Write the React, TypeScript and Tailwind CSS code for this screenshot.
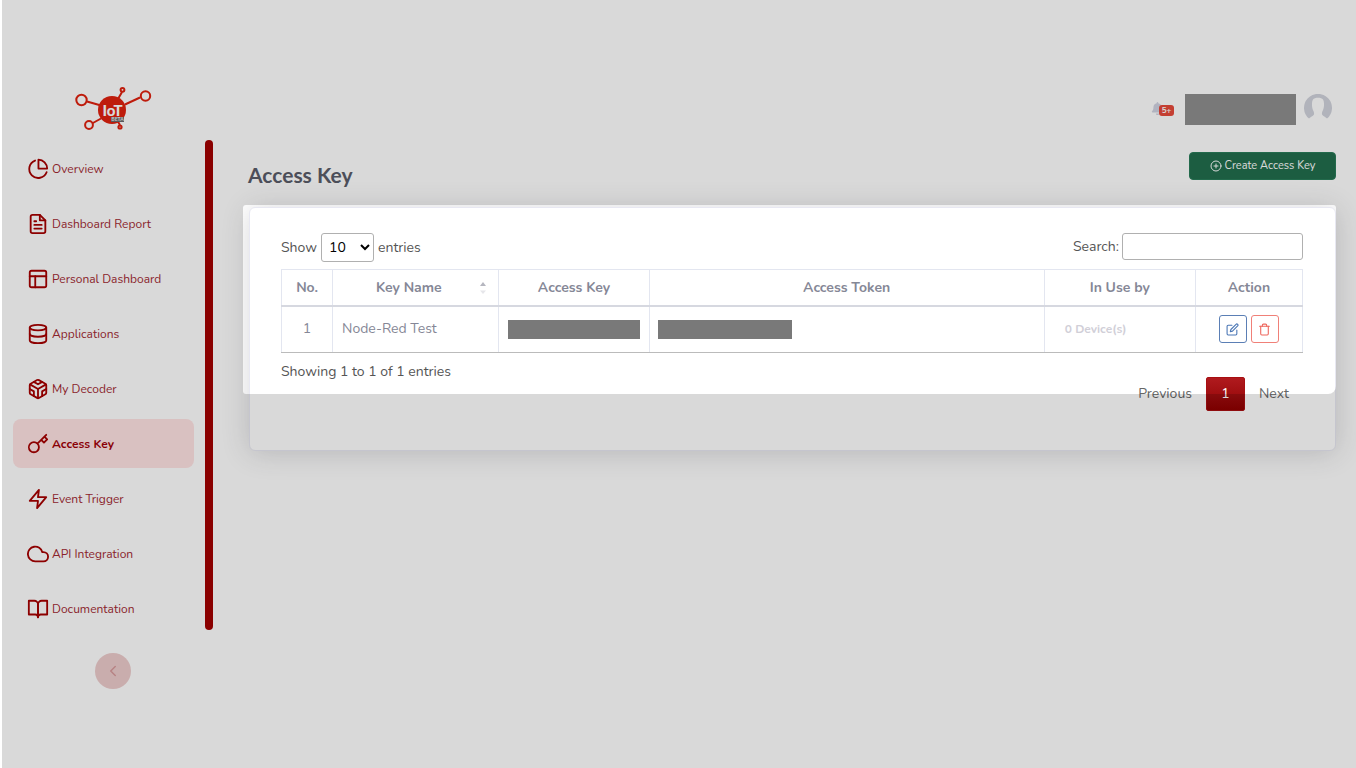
import React from "react";
import {
  FiBookOpen,
  FiChevronLeft,
  FiCloud,
  FiCodesandbox,
  FiDatabase,
  FiEdit,
  FiFileText,
  FiKey,
  FiLayout,
  FiPlusCircle,
  FiTrash,
  FiZap,
} from "react-icons/fi";
import { FaBell } from "react-icons/fa";

type IconProps = { className?: string };

function PieIcon({ className }: IconProps) {
  return (
    <svg viewBox="0 0 24 24" className={className} fill="none" stroke="currentColor" strokeWidth="2" strokeLinecap="round" strokeLinejoin="round" aria-hidden="true">
      <path d="M8.800 2.800A9.800 9.800 0 1 0 21.400 15.500" />
      <path d="M12.500 1.800v9.700H22A9.800 9.800 0 0 0 12.500 1.800z" />
    </svg>
  );
}

function Logo() {
  return (
    <svg viewBox="0 0 78 46" className="h-[46px] w-[78px]" fill="none" stroke="#e0210f" strokeWidth="2" role="img" aria-label="IoT Beta">
      <path d="M13 15.500 27 19.500M51 18.500 66 11.500M44 13l4-7M27 32.500l-9 5M43 34l3 5" />
      <circle cx="7.500" cy="14" r="5.200" />
      <circle cx="71.500" cy="10" r="4.700" />
      <circle cx="48.500" cy="3.800" r="1.900" />
      <circle cx="15" cy="39" r="3.900" />
      <circle cx="46" cy="41" r="1.600" />
      <circle cx="38" cy="24" r="14" fill="#e0210f" stroke="none" />
      <text x="38.500" y="29.500" textAnchor="middle" fontFamily="Lato, sans-serif" fontWeight="900" fontSize="15" fill="#fff" stroke="none">IoT</text>
      <rect x="37" y="31" width="13" height="5" fill="#68686b" stroke="none" />
      <text x="43.500" y="35.300" textAnchor="middle" fontFamily="Lato, sans-serif" fontWeight="700" fontSize="5" fill="#e8e8e8" stroke="none">BETA</text>
    </svg>
  );
}

function Avatar() {
  return (
    <svg viewBox="0 0 28 28" className="size-7" role="img" aria-label="Profile">
      <path fill="#d1d3dc" d="M5 24.600A14 14 0 1 1 23 24.600C21.500 23 19 22 18.200 20.800C17.600 19.500 18 17.800 18.800 16.400C20.300 13.500 20.500 8 19 5.600C17.500 3 10.500 3 9 5.600C7.500 8 7.700 13.500 9.200 16.400C10 17.800 10.400 19.500 9.800 20.800C9 22 6.500 23 5 24.600Z" />
    </svg>
  );
}

const navItems = [
  { label: "Overview", Icon: PieIcon },
  { label: "Dashboard Report", Icon: FiFileText },
  { label: "Personal Dashboard", Icon: FiLayout },
  { label: "Applications", Icon: FiDatabase },
  { label: "My Decoder", Icon: FiCodesandbox },
  { label: "Access Key", Icon: FiKey, active: true },
  { label: "Event Trigger", Icon: FiZap },
  { label: "API Integration", Icon: FiCloud },
  { label: "Documentation", Icon: FiBookOpen },
];

function Sidebar() {
  return (
    <aside className="flex w-[211px] shrink-0 flex-col pt-[86px]">
      <div className="h-[54px] pl-[72px]">
        <Logo />
      </div>
      <div className="flex justify-between">
        <nav className="flex w-[192px] flex-col gap-1.5 pt-1 pl-[11px]">
          {navItems.map(({ label, Icon, active }) => (
            <a
              key={label}
              href="#"
              aria-current={active ? "page" : undefined}
              className={
                active
                  ? "flex h-[49px] items-center gap-[3px] rounded-lg bg-[#ffe3e3] pl-3.5 text-xs font-bold text-[#a30008]"
                  : "flex h-[49px] items-center gap-[3px] pl-3.5 text-xs text-[#a32a33]"
              }
            >
              <Icon className="size-[22px] text-[#a60000]" />
              {label}
            </a>
          ))}
        </nav>
        <div className="mb-[3px] w-2 rounded-full bg-[#a30000]" />
      </div>
      <button type="button" aria-label="Collapse sidebar" className="mt-5 ml-[93px] flex size-9 items-center justify-center rounded-full bg-[#edcccc] text-[#d79a9c]">
        <FiChevronLeft className="size-[18px]" />
      </button>
    </aside>
  );
}

const th = "border border-[#e3e6f0] border-b-2 border-b-[#d6d8e0] px-2 pt-px text-center font-bold";
const td = "border border-[#e3e6f0] border-b-[#bbbbbb]";

function KeyTable() {
  return (
    <table className="mt-[7px] w-full table-fixed border-collapse text-sm text-[#858796]">
      <colgroup>
        <col className="w-[5%]" />
        <col className="w-[16.300%]" />
        <col className="w-[14.700%]" />
        <col />
        <col className="w-[14.800%]" />
        <col className="w-[10.500%]" />
      </colgroup>
      <thead>
        <tr className="h-9">
          <th className={th}>No.</th>
          <th className={th}>
            <div className="flex items-center pr-1">
              <span className="flex-1 pr-1">Key Name</span>
              <svg viewBox="0 0 6 12" className="h-3 w-1.5" aria-hidden="true">
                <path d="M0 4 3 0l3 4z" fill="#b5b6bf" />
                <path d="M0 8.500h6l-3 3.500z" fill="#e6e6ea" />
              </svg>
            </div>
          </th>
          <th className={th}>Access Key</th>
          <th className={th}>Access Token</th>
          <th className={th}>In Use by</th>
          <th className={th}>Action</th>
        </tr>
      </thead>
      <tbody>
        <tr className="h-[47px]">
          <td className={`${td} text-center`}>1</td>
          <td className={`${td} pl-[9px]`}>Node-Red Test</td>
          <td className={`${td} px-[9px]`}>
            <div className="h-[19px] bg-[#797979]" />
          </td>
          <td className={`${td} px-2`}>
            <div className="h-[19px] w-[134px] bg-[#797979]" />
          </td>
          <td className={`${td} pl-5 text-xs font-bold text-[#d1cfd8]`}>0 Device(s)</td>
          <td className={td}>
            <div className="flex justify-center gap-1">
              <button type="button" aria-label="Edit" className="flex size-7 items-center justify-center rounded-[3px] border border-[#5b7fb5] text-[#4a76b5]">
                <FiEdit className="size-[13px]" />
              </button>
              <button type="button" aria-label="Delete" className="flex size-7 items-center justify-center rounded-[3px] border border-[#f08078] text-[#ee665c]">
                <FiTrash className="size-[13px]" />
              </button>
            </div>
          </td>
        </tr>
      </tbody>
    </table>
  );
}

function KeyCard() {
  return (
    <section className="relative ml-1.5">
      <div className="h-[244px] rounded-md border border-[#e8e8f2] bg-white pt-[25px] pr-8 pl-[31px] text-sm text-[#555555] shadow-[0_2px_28px_rgba(58,59,69,0.2)]">
        <div className="flex items-start justify-between">
          <label className="flex items-center gap-1">
            Show
            <select defaultValue="10" className="h-[29px] w-[53px] rounded-[3px] border border-[#b0b0b0] bg-white pl-[3px] text-sm text-black">
              <option>10</option>
              <option>25</option>
              <option>50</option>
              <option>100</option>
            </select>
            entries
          </label>
          <label className="flex items-center gap-[3px]">
            Search:
            <input type="search" className="h-[27px] w-[181px] rounded-[3px] border border-[#b0b0b0] bg-white px-1" />
          </label>
        </div>
        <KeyTable />
        <div className="flex items-start justify-between pt-2">
          <p className="leading-[22px]">Showing 1 to 1 of 1 entries</p>
          <div className="flex items-center pt-4 text-[#666666]">
            <button type="button" className="h-[34px] px-3.5">Previous</button>
            <button type="button" className="h-[34px] w-[39px] rounded-[2px] border border-[#a80f12] bg-linear-to-b from-[#b01a1e] to-[#900000] text-white">1</button>
            <button type="button" className="h-[34px] px-3.5">Next</button>
          </div>
        </div>
      </div>
      <div className="pointer-events-none absolute -top-0.5 right-0 -left-1.5 h-[189px] rounded-l-[3px] rounded-tr-[3px] rounded-br-lg shadow-[0_0_0_3000px_rgba(0,0,0,0.15)]" />
    </section>
  );
}

export default function App() {
  return (
    <div className="min-h-screen bg-white pl-0.5 font-[Nunito,Lato,sans-serif]">
      <div className="flex min-h-screen overflow-hidden bg-white">
        <Sidebar />
        <main className="min-w-0 flex-1 pt-[94px] pr-5 pl-[30px]">
          <header className="flex h-[31px] items-start justify-end pr-1">
            <div className="relative mt-2 mr-[22px] w-3">
              <FaBell className="size-[13px] text-[#d1d3e2]" aria-label="Notifications" />
              <span className="absolute top-[3px] left-2 flex h-[11px] w-[15px] items-center justify-center rounded-[3px] bg-[#e74a3b] text-[8px] font-bold text-white">5+</span>
            </div>
            <div className="relative z-10 mr-2 h-[31px] w-[111px] bg-[#797979]" />
            <Avatar />
          </header>
          <div className="mt-[27px] flex h-[55px] items-start justify-between">
            <h1 className="pt-[9px] pl-[5px] font-[Lato,sans-serif] text-[21px] leading-7 font-bold text-[#5a5c69]">Access Key</h1>
            <button type="button" className="flex h-7 w-[147px] items-center justify-center gap-[3px] rounded-[4px] border border-[#2a7d5a] bg-[#216e4d] text-[11px] text-white">
              <FiPlusCircle className="size-3" />
              Create Access Key
            </button>
          </div>
          <KeyCard />
        </main>
      </div>
    </div>
  );
}
